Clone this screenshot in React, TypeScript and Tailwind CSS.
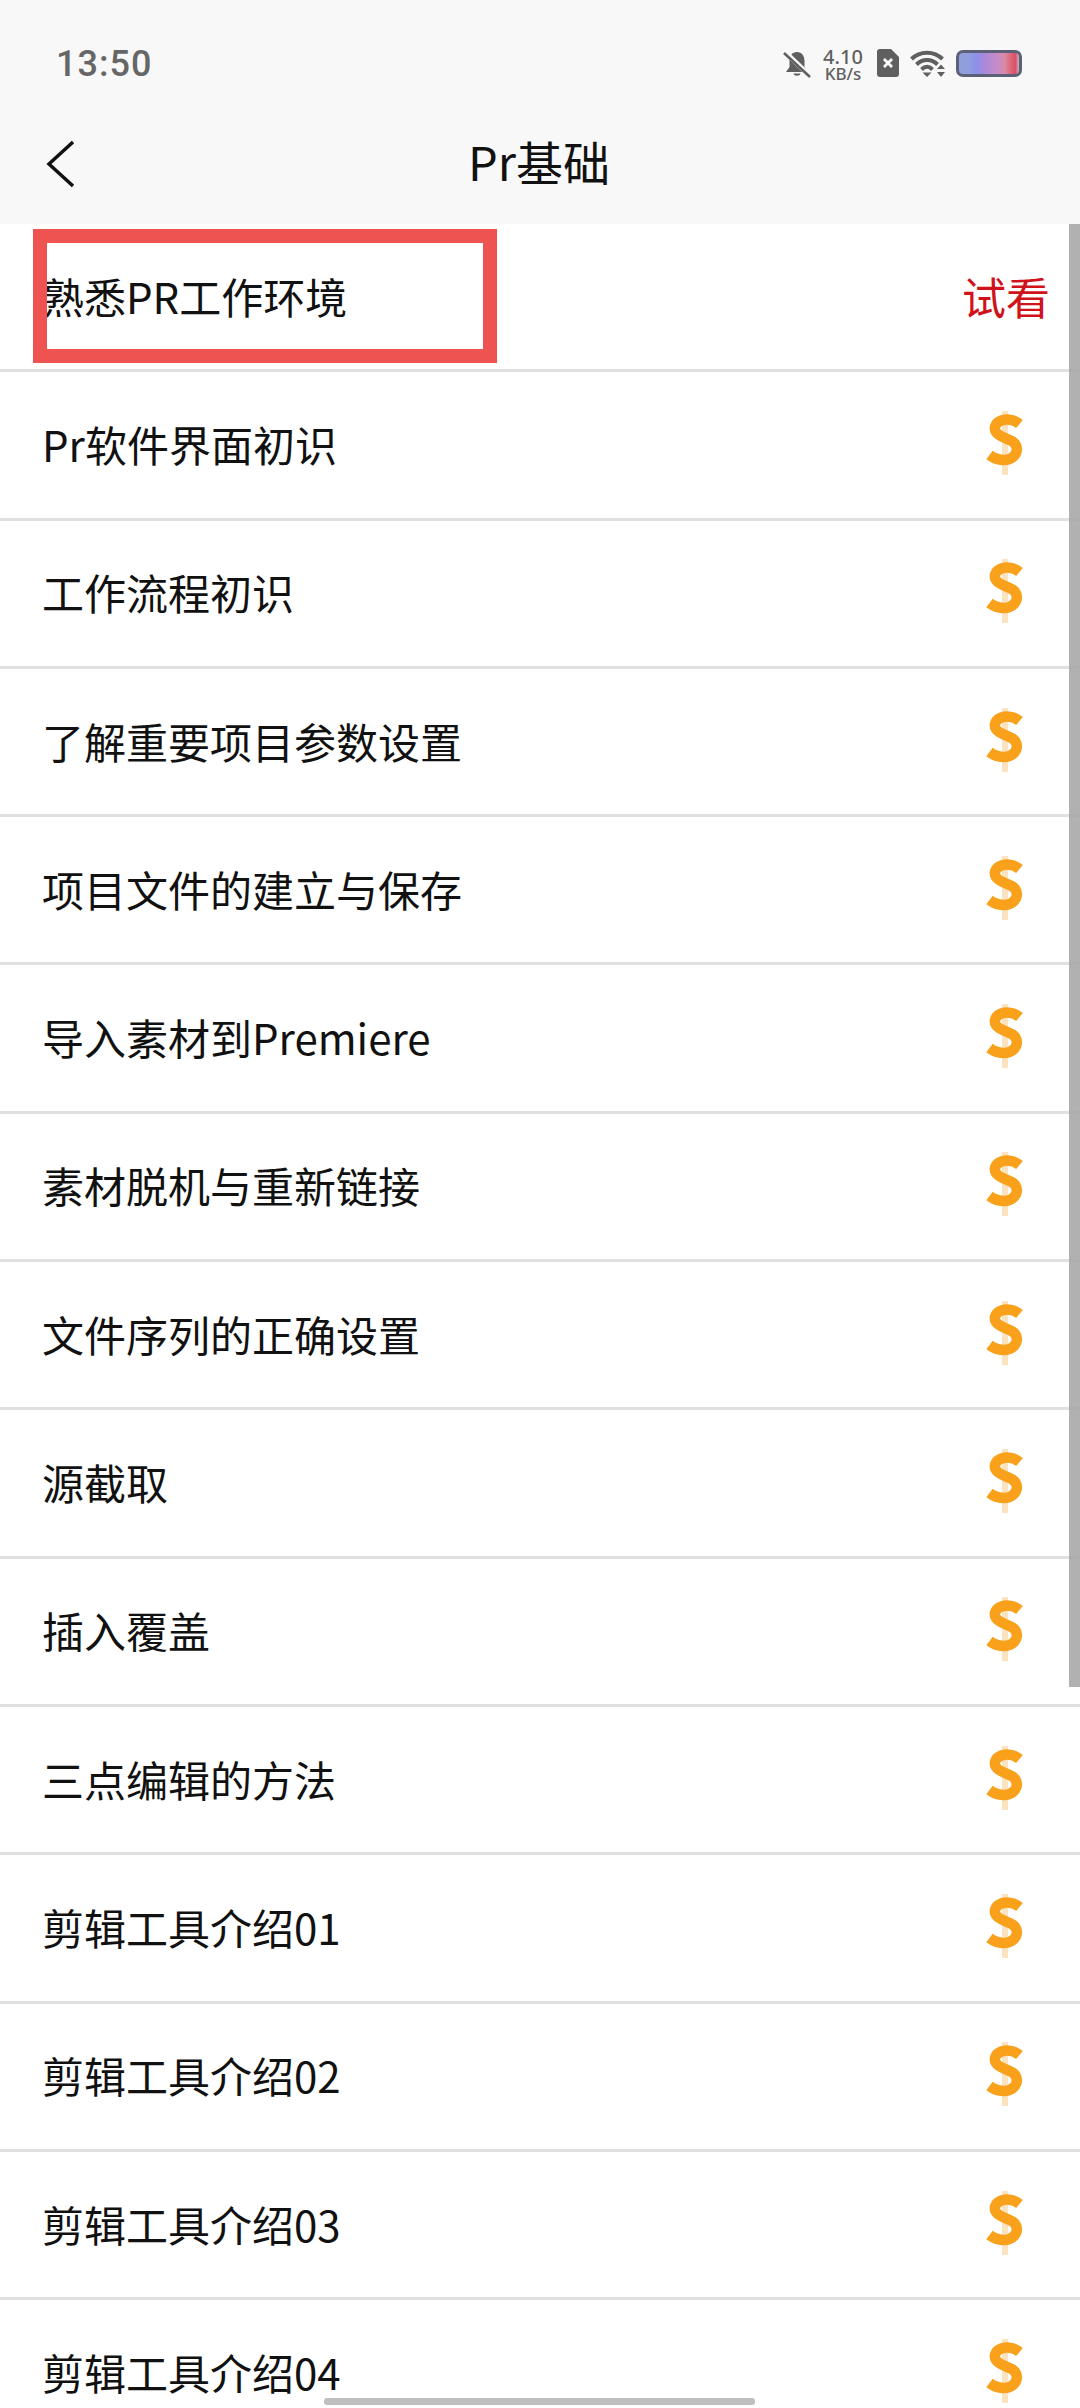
import React from "react";

const lessons = [
  "Pr软件界面初识",
  "工作流程初识",
  "了解重要项目参数设置",
  "项目文件的建立与保存",
  "导入素材到Premiere",
  "素材脱机与重新链接",
  "文件序列的正确设置",
  "源截取",
  "插入覆盖",
  "三点编辑的方法",
  "剪辑工具介绍01",
  "剪辑工具介绍02",
  "剪辑工具介绍03",
  "剪辑工具介绍04",
];

function CoinIcon() {
  return (
    <svg width="44" height="66" viewBox="0 0 44 66" className="mx-auto -translate-y-[1px]">
      <path d="M22 1V65" stroke="#fce3c0" strokeWidth="6" />
      <path
        d="M36.500 14C31 9.500 24 8.500 18.500 10.500C12 13 10.500 18 13 22C16 27 24 28 29.500 31.500C35 35.500 35 41.500 31 46C26 51.500 15 51.500 6.500 45"
        fill="none"
        stroke="#f9a11b"
        strokeWidth="10.500"
      />
    </svg>
  );
}

function StatusIcons() {
  return (
    <div className="flex items-center">
      {/* muted bell */}
      <svg width="28" height="28" viewBox="0 0 28 28" className="mr-[10px]">
        <path d="M14 2C9 2 6.500 6 6.500 11V17L3 22H25L21.500 17V11C21.500 6 19 2 14 2Z" fill="#5f5f5f" />
        <path d="M10.500 23.500H17.500C17 26.500 11 26.500 10.500 23.500Z" fill="#5f5f5f" />
        <path d="M2 2L27 26" stroke="#f8f8f8" strokeWidth="5" />
        <path d="M1 3L27 27" stroke="#5f5f5f" strokeWidth="2.500" />
      </svg>
      <div className="flex w-[44px] flex-col items-center font-['Noto_Sans'] font-medium text-[#5f5f5f]">
        <span className="text-[20px] leading-[19px]">4.10</span>
        <span className="text-[17px] leading-[15px]">KB/s</span>
      </div>
      {/* sim card without signal */}
      <svg width="24" height="29" viewBox="0 0 24 29" className="ml-[11px]">
        <path d="M4 0H15L23 8V25C23 27 22 28 20 28H4C2 28 1 27 1 25V3C1 1 2 0 4 0Z" fill="#5f5f5f" />
        <path d="M8 10L16 18M16 10L8 18" stroke="#fff" strokeWidth="2.800" />
      </svg>
      {/* wifi */}
      <svg width="36" height="28" viewBox="0 0 36 28" className="ml-[10px]">
        <path d="M1.500 9C10 0.500 24 0.500 32.500 9" fill="none" stroke="#5f5f5f" strokeWidth="4" />
        <path d="M6.500 14.500C12.500 8.500 21.500 8.500 27.500 14.500" fill="none" stroke="#5f5f5f" strokeWidth="4" />
        <path d="M11.500 19.500C15 16 19 16 22.500 19.500" fill="none" stroke="#5f5f5f" strokeWidth="4" />
        <path d="M12.500 22.500H21.500L17 27Z" fill="#5f5f5f" />
        <path d="M27 19H35L31 14.500ZM27 22H35L31 27Z" fill="#5f5f5f" />
      </svg>
      {/* battery */}
      <div className="ml-[10px] h-[27px] w-[66px] rounded-[7px] border-[3px] border-[#5c6178] bg-[linear-gradient(90deg,#8f9fdc_0%,#8f9fdc_14%,#8f8fea_30%,#a88ad8_42%,#c48ccb_62%,#d98aa8_76%,#dc6f80_84%,#dc4f63_94%,#c8b0c8_100%)]" />
    </div>
  );
}

export default function App() {
  return (
    <div className="relative h-[2408px] w-[1080px] overflow-hidden bg-white font-['Noto_Sans_CJK_SC','Noto_Sans',sans-serif] text-[#111]">
      {/* Header */}
      <header className="h-[224px] bg-[#f8f8f8]">
        <div className="flex h-[126px] items-center justify-between pl-[56px] pr-[58px] pt-[1px]">
          <span className="font-['Roboto'] text-[36px] font-medium leading-none tracking-[1px] text-[#666]">13:50</span>
          <StatusIcons />
        </div>
        <div className="relative flex h-[76px] items-center justify-center pb-[8px]">
          <svg width="30" height="50" viewBox="0 0 30 50" className="absolute left-[45px] top-[13px]">
            <path d="M28 3L4 25L28 47" fill="none" stroke="#111" strokeWidth="3.500" />
          </svg>
          <h1 className="-translate-x-[1px] text-[47px] font-normal leading-none">Pr基础</h1>
        </div>
      </header>

      {/* Lesson list */}
      <ul>
        <li className="flex h-[148.3px] items-center justify-between border-b-[3px] border-[#e0e0e0] pb-[2px] pl-[42px] pr-[33px] text-[42px] leading-none">
          <span>熟悉PR工作环境</span>
          <span className="w-[85px] whitespace-nowrap text-center text-[44px] text-[#d0121b]">试看</span>
        </li>
        {lessons.map((title) => (
          <li
            key={title}
            className="flex h-[148.3px] items-center justify-between border-b-[3px] border-[#e0e0e0] pb-[2px] pl-[42px] pr-[33px] text-[42px] leading-none"
          >
            <span>{title}</span>
            <span className="w-[85px]">
              <CoinIcon />
            </span>
          </li>
        ))}
      </ul>

      {/* Highlight box */}
      <div className="absolute left-[33px] top-[229px] h-[134px] w-[464px] border-[14px] border-[#ee5351]" />

      {/* Scrollbar */}
      <div className="absolute right-0 top-[224px] h-[1463px] w-[11px] bg-[#a8a8a8]/90" />

      {/* Home indicator */}
      <div className="absolute left-[324px] top-[2398px] h-[7px] w-[431px] rounded-[3px] bg-[#bfbfbf]" />
    </div>
  );
}
